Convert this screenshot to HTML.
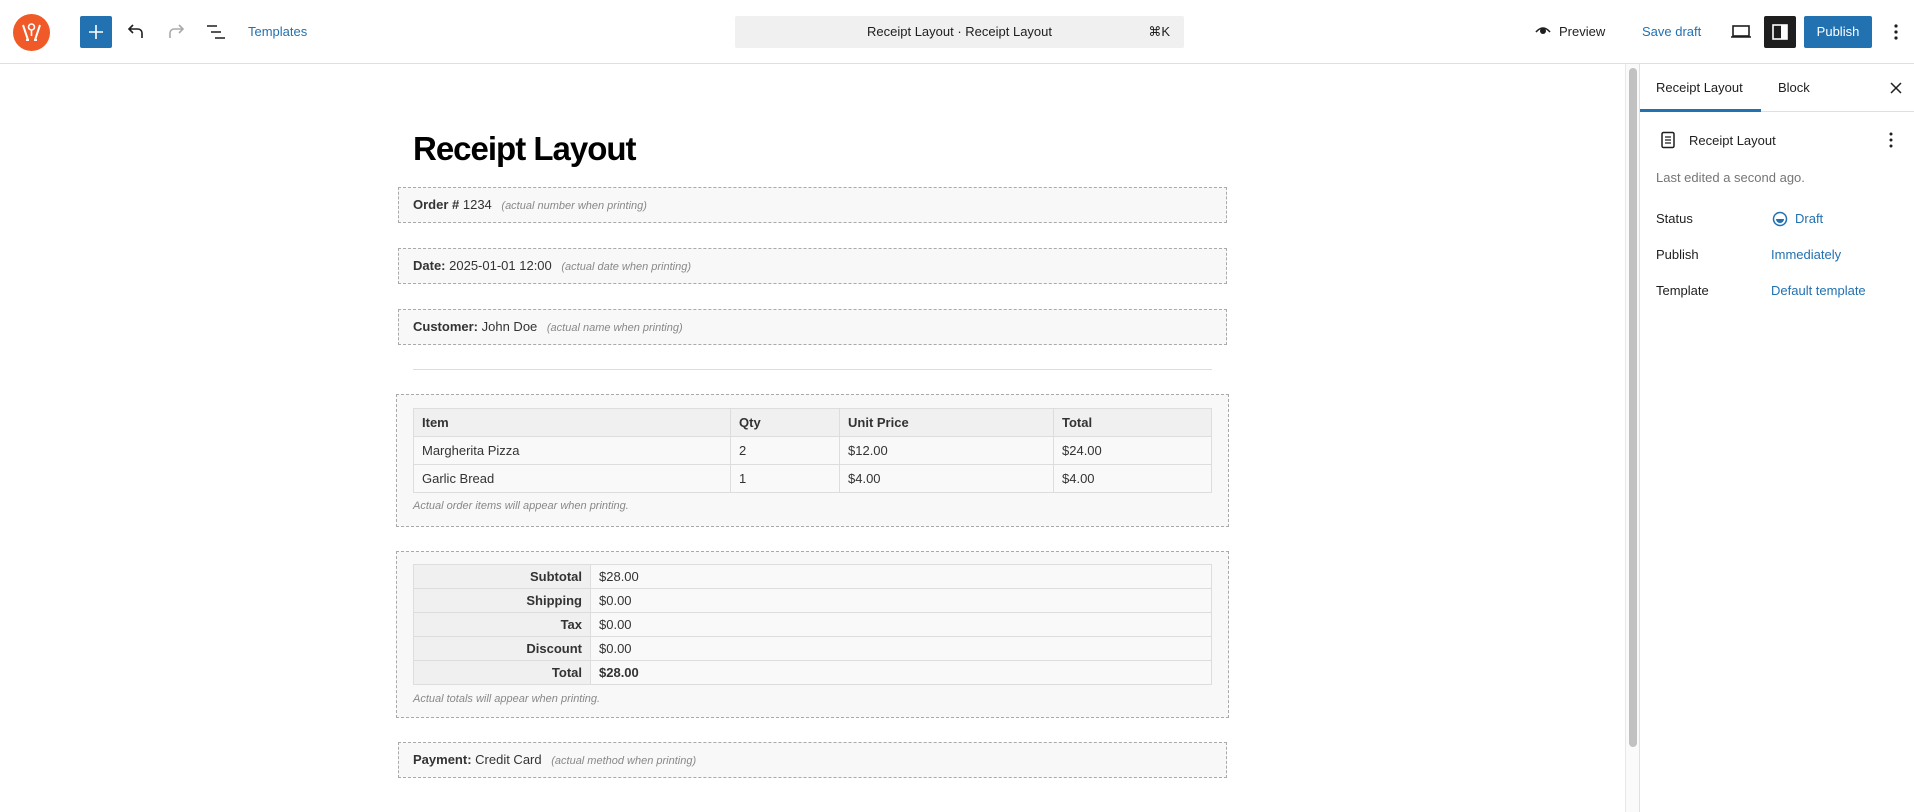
<!DOCTYPE html>
<html><head><meta charset="utf-8"><style>
*{box-sizing:border-box;margin:0;padding:0}
body{width:1914px;height:812px;overflow:hidden;background:#fff;font-family:"Liberation Sans",Arial,sans-serif;color:#1e1e1e;position:relative}
.abs{position:absolute}
.hdr{position:absolute;left:0;top:0;width:1914px;height:64px;border-bottom:1px solid #e0e0e0;background:#fff}
.blue{color:#2271b1}
.box{position:absolute;left:398px;width:829px;height:36px;border:1px dashed #aaa;background:#f8f8f8;font-size:13px;color:#333;padding:0 0 0 14px;line-height:34px}
.box i{font-size:11px;color:#888;margin-left:6px}
.box b{color:#333}
table{border-collapse:collapse;font-size:13px;color:#333}
td,th{border:1px solid #ddd;text-align:left;padding:0 8px}
.items th{background:#f0f0f0;height:28px}
.items td{background:#f9f9f9;height:28px}
.tot td{height:24px;background:#f9f9f9}
.tot td.l{background:#f0f0f0;font-weight:bold;text-align:right}
.cap{position:absolute;left:413px;font-size:11px;font-style:italic;color:#888}
.side{font-size:13px}
</style></head><body>
<div class="hdr">
 <svg class="abs" style="left:13px;top:14px" width="37" height="37" viewBox="0 0 37 37"><circle cx="18.5" cy="18.5" r="18.5" fill="#f05a28"/><path d="M10 11 L15 26 M27 11 L22 26 M13 26h3 M21 26h3" stroke="#fff" stroke-width="2" fill="none"/><circle cx="18.5" cy="13" r="3" fill="none" stroke="#fff" stroke-width="1.6"/><path d="M18.5 16 L18.5 22" stroke="#fff" stroke-width="1.6"/></svg>
 <div class="abs" style="left:80px;top:16px;width:32px;height:32px;background:#2271b1;border-radius:2px"><svg width="32" height="32"><path d="M16 9v14M9 16h14" stroke="#fff" stroke-width="1.6"/></svg></div>
 <svg class="abs" style="left:124px;top:20px" width="24" height="24" viewBox="0 0 24 24"><path d="M18 18v-5a4 4 0 0 0-4-4H6M9 5L5 9l4 4" stroke="#1e1e1e" stroke-width="1.6" fill="none"/></svg>
 <svg class="abs" style="left:164px;top:20px" width="24" height="24" viewBox="0 0 24 24"><path d="M6 18v-5a4 4 0 0 1 4-4h8M15 5l4 4-4 4" stroke="#aaa" stroke-width="1.6" fill="none"/></svg>
 <svg class="abs" style="left:204px;top:20px" width="24" height="24" viewBox="0 0 24 24"><path d="M3 6h10M7 12h10M11 18h10" stroke="#1e1e1e" stroke-width="1.6"/></svg>
 <div class="abs blue" style="left:248px;top:24px;font-size:13px">Templates</div>
 <div class="abs" style="left:735px;top:16px;width:449px;height:32px;background:#f0f0f0;border-radius:2px;font-size:13px;line-height:32px;text-align:center">Receipt Layout · Receipt Layout<span class="abs" style="right:14px;top:0">⌘K</span></div>
 <svg class="abs" style="left:1535px;top:24px" width="16" height="14" viewBox="0 0 16 14"><path d="M1 8 Q8 0 15 8" stroke="#1e1e1e" stroke-width="1.6" fill="none"/><circle cx="8" cy="7" r="3" fill="#1e1e1e"/></svg>
 <div class="abs" style="left:1559px;top:24px;font-size:13px">Preview</div>
 <div class="abs blue" style="left:1642px;top:24px;font-size:13px">Save draft</div>
 <svg class="abs" style="left:1730px;top:22px" width="22" height="20" viewBox="0 0 22 20"><rect x="3" y="4" width="16" height="10" fill="none" stroke="#1e1e1e" stroke-width="1.6"/><path d="M1 15h20" stroke="#1e1e1e" stroke-width="1.6"/></svg>
 <div class="abs" style="left:1764px;top:16px;width:32px;height:32px;background:#1e1e1e;border-radius:2px"><svg width="32" height="32"><rect x="9" y="9" width="14" height="14" fill="none" stroke="#fff" stroke-width="1.6"/><rect x="17" y="9" width="6" height="14" fill="#fff"/></svg></div>
 <div class="abs" style="left:1804px;top:16px;width:68px;height:32px;background:#2271b1;border-radius:2px;color:#fff;font-size:13px;line-height:32px;text-align:center">Publish</div>
 <svg class="abs" style="left:1886px;top:20px" width="20" height="24"><circle cx="10" cy="6" r="1.6" fill="#1e1e1e"/><circle cx="10" cy="12" r="1.6" fill="#1e1e1e"/><circle cx="10" cy="18" r="1.6" fill="#1e1e1e"/></svg>
</div>

<div class="abs" style="left:1625px;top:64px;width:14px;height:748px;border-left:1px solid #e8e8e8;background:#fafafa"></div>
<div class="abs" style="left:1629px;top:68px;width:8px;height:679px;background:#c1c1c1;border-radius:4px"></div>

<div class="abs side" style="left:1639px;top:64px;width:275px;height:748px;border-left:1px solid #e0e0e0;background:#fff">
 <div class="abs" style="left:0;top:0;width:275px;height:48px;border-bottom:1px solid #e0e0e0"></div>
 <div class="abs" style="left:0;top:45px;width:121px;height:3px;background:#2271b1"></div>
 <div class="abs" style="left:16px;top:16px">Receipt Layout</div>
 <div class="abs" style="left:138px;top:16px">Block</div>
 <svg class="abs" style="left:248px;top:16px" width="16" height="16"><path d="M3 3l10 10M13 3L3 13" stroke="#1e1e1e" stroke-width="1.5"/></svg>
 <svg class="abs" style="left:19px;top:67px" width="18" height="18" viewBox="0 0 18 18"><rect x="3" y="1.5" width="12" height="15" rx="1.5" fill="none" stroke="#1e1e1e" stroke-width="1.5"/><path d="M6 6h6M6 9h6M6 12h6" stroke="#1e1e1e" stroke-width="1.3"/></svg>
 <div class="abs" style="left:49px;top:69px;font-weight:500">Receipt Layout</div>
 <svg class="abs" style="left:243px;top:65px" width="16" height="22"><circle cx="8" cy="5" r="1.5" fill="#1e1e1e"/><circle cx="8" cy="11" r="1.5" fill="#1e1e1e"/><circle cx="8" cy="17" r="1.5" fill="#1e1e1e"/></svg>
 <div class="abs" style="left:16px;top:106px;color:#757575">Last edited a second ago.</div>
 <div class="abs" style="left:16px;top:147px">Status</div>
 <svg class="abs" style="left:131px;top:146px" width="18" height="18"><circle cx="9" cy="9" r="6.5" fill="none" stroke="#2271b1" stroke-width="1.5"/><path d="M5 9h8a4 4 0 0 1-8 0z" fill="#2271b1"/></svg>
 <div class="abs blue" style="left:155px;top:147px">Draft</div>
 <div class="abs" style="left:16px;top:183px">Publish</div>
 <div class="abs blue" style="left:131px;top:183px">Immediately</div>
 <div class="abs" style="left:16px;top:219px">Template</div>
 <div class="abs blue" style="left:131px;top:219px">Default template</div>
</div>

<div class="abs" style="left:413px;top:130px;font-size:33px;font-weight:bold;letter-spacing:-1px;color:#000">Receipt Layout</div>
<div class="box" style="top:187px"><b>Order #</b> 1234 <i>(actual number when printing)</i></div>
<div class="box" style="top:248px"><b>Date:</b> 2025-01-01 12:00 <i>(actual date when printing)</i></div>
<div class="box" style="top:309px"><b>Customer:</b> John Doe <i>(actual name when printing)</i></div>
<div class="abs" style="left:413px;top:369px;width:799px;height:1px;background:#ddd"></div>

<div class="abs" style="left:396px;top:394px;width:833px;height:133px;border:1px dashed #aaa;background:#f8f8f8"></div>
<table class="items abs" style="left:413px;top:408px;width:799px">
<tr><th style="width:317px">Item</th><th style="width:109px">Qty</th><th style="width:214px">Unit Price</th><th>Total</th></tr>
<tr><td>Margherita Pizza</td><td>2</td><td>$12.00</td><td>$24.00</td></tr>
<tr><td>Garlic Bread</td><td>1</td><td>$4.00</td><td>$4.00</td></tr>
</table>
<div class="cap" style="top:500px">Actual order items will appear when printing.</div>

<div class="abs" style="left:396px;top:551px;width:833px;height:167px;border:1px dashed #aaa;background:#f8f8f8"></div>
<table class="tot abs" style="left:413px;top:564px;width:799px">
<tr><td class="l" style="width:177px">Subtotal</td><td>$28.00</td></tr>
<tr><td class="l">Shipping</td><td>$0.00</td></tr>
<tr><td class="l">Tax</td><td>$0.00</td></tr>
<tr><td class="l">Discount</td><td>$0.00</td></tr>
<tr><td class="l">Total</td><td><b>$28.00</b></td></tr>
</table>
<div class="cap" style="top:693px">Actual totals will appear when printing.</div>

<div class="box" style="top:742px"><b>Payment:</b> Credit Card <i>(actual method when printing)</i></div>
</body></html>
